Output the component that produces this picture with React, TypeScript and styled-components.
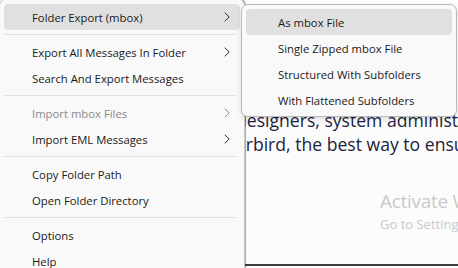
import React from "react";
import styled, { createGlobalStyle } from "styled-components";

const Global = createGlobalStyle`
  html, body { margin: 0; padding: 0; }
  body {
    width: 458px;
    height: 268px;
    overflow: hidden;
    background: #fcfcfc;
    font-family: "Open Sans", "Noto Sans", sans-serif;
  }
`;

const Screen = styled.div`
  position: relative;
  width: 458px;
  height: 268px;
  overflow: hidden;
  background: #fcfcfc;
`;

const Page = styled.div`
  height: 266px;
  border-bottom: 2px solid #3c3c3c;
  display: flex;
  flex-direction: column;
  padding-top: 108px;
  box-sizing: border-box;
`;

const Line = styled.div<{ $indent: number }>`
  padding-left: ${(p) => p.$indent}px;
  white-space: nowrap;
  font-family: "Open Sans", sans-serif;
  font-size: 17.6px;
  line-height: 24px;
  color: #1e1e3a;
`;

const Watermark = styled.div`
  position: absolute;
  left: 380px;
  top: 188px;
  color: #c9c9c9;
  font-family: "Open Sans", sans-serif;
  white-space: nowrap;
`;

const WmTitle = styled.div`
  font-size: 19px;
  line-height: 27px;
  letter-spacing: -0.3px;
`;

const WmSub = styled.div`
  font-size: 13px;
  line-height: 18px;
`;

const Menu = styled.div`
  position: absolute;
  left: -1px;
  top: -2px;
  width: 246px;
  height: 290px;
  box-sizing: border-box;
  padding: 5px 4px 4px 4px;
  background: #f9f9f9;
  border: 1px solid #c9c9c9;
  border-radius: 8px;
  box-shadow: 1px 0 1px rgba(0, 0, 0, 0.35);
  display: flex;
  flex-direction: column;
`;

const SubMenu = styled.div`
  position: absolute;
  left: 241px;
  top: 4px;
  width: 216px;
  box-sizing: border-box;
  padding: 4px 4px 3px 4px;
  background: #f9f9f9;
  border: 1px solid #b9b9b9;
  border-radius: 7px;
  box-shadow: 0 2px 5px rgba(0, 0, 0, 0.12);
  display: flex;
  flex-direction: column;
`;

const Item = styled.div<{ $active?: boolean; $disabled?: boolean; $pad: number }>`
  height: 26px;
  flex: none;
  display: flex;
  align-items: center;
  justify-content: space-between;
  padding-left: ${(p) => p.$pad}px;
  padding-right: 10px;
  border-radius: 4px;
  background: ${(p) => (p.$active ? "#e0e0e0" : "transparent")};
  color: ${(p) => (p.$disabled ? "#8a8a8a" : "#1a1a1a")};
  font-size: 11.3px;
  white-space: nowrap;
`;

const Separator = styled.div`
  flex: none;
  height: 1px;
  margin: 4px 4px 4px 0;
  background: #e0e0e0;
`;

const Chevron: React.FC<{ muted?: boolean }> = ({ muted }) => (
  <svg width="6" height="10" viewBox="0 0 6 10" style={{ display: "block" }}>
    <path
      d="M0.7 0.7 L5.2 5 L0.7 9.3"
      fill="none"
      stroke={muted ? "#8a8a8a" : "#333"}
      strokeWidth="1"
    />
  </svg>
);

type Entry =
  | { kind: "item"; label: string; sub?: boolean; active?: boolean; disabled?: boolean }
  | { kind: "sep" };

const mainEntries: Entry[] = [
  { kind: "item", label: "Folder Export (mbox)", sub: true, active: true },
  { kind: "sep" },
  { kind: "item", label: "Export All Messages In Folder", sub: true },
  { kind: "item", label: "Search And Export Messages" },
  { kind: "sep" },
  { kind: "item", label: "Import mbox Files", sub: true, disabled: true },
  { kind: "item", label: "Import EML Messages", sub: true },
  { kind: "sep" },
  { kind: "item", label: "Copy Folder Path" },
  { kind: "item", label: "Open Folder Directory" },
  { kind: "sep" },
  { kind: "item", label: "Options" },
  { kind: "item", label: "Help" },
];

const subEntries = [
  { label: "As mbox File", active: true },
  { label: "Single Zipped mbox File" },
  { label: "Structured With Subfolders" },
  { label: "With Flattened Subfolders" },
];

export default function App() {
  return (
    <Screen>
      <Global />
      <Page>
        <Line $indent={236}>designers, system administrators, and everyone</Line>
        <Line $indent={183}>Thunderbird, the best way to ensure your data</Line>
      </Page>
      <Watermark>
        <WmTitle>Activate Windows</WmTitle>
        <WmSub>Go to Settings to activate Windows.</WmSub>
      </Watermark>
      <Menu>
        {mainEntries.map((e, i) =>
          e.kind === "sep" ? (
            <Separator key={i} />
          ) : (
            <Item key={i} $pad={28} $active={e.active} $disabled={e.disabled}>
              <span>{e.label}</span>
              {e.sub && <Chevron muted={e.disabled} />}
            </Item>
          )
        )}
      </Menu>
      <SubMenu>
        {subEntries.map((e, i) => (
          <Item key={i} $pad={32} $active={e.active}>
            <span>{e.label}</span>
          </Item>
        ))}
      </SubMenu>
    </Screen>
  );
}
